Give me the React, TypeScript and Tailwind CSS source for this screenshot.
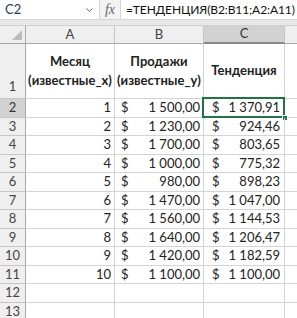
import React from "react";

const rows = [
  { n: 2, a: "1", b: "1 500,00", c: "1 370,91" },
  { n: 3, a: "2", b: "1 230,00", c: "924,46" },
  { n: 4, a: "3", b: "1 700,00", c: "803,65" },
  { n: 5, a: "4", b: "1 000,00", c: "775,32" },
  { n: 6, a: "5", b: "980,00", c: "898,23" },
  { n: 7, a: "6", b: "1 470,00", c: "1 047,00" },
  { n: 8, a: "7", b: "1 560,00", c: "1 144,53" },
  { n: 9, a: "8", b: "1 640,00", c: "1 206,47" },
  { n: 10, a: "9", b: "1 420,00", c: "1 182,59" },
  { n: 11, a: "10", b: "1 100,00", c: "1 100,00" },
];

const font = { fontFamily: "Lato, 'Liberation Sans', sans-serif" };

export default function App() {
  const heights = [19, 18, 19, 18, 19, 18, 19, 18, 19, 18, 19, 18];
  return (
    <div className="w-[297px] h-[318px] overflow-hidden bg-white text-[13px] text-[#222]" style={font}>
      {/* formula bar */}
      <div className="flex h-[20px] border-b border-[#d4d4d4] bg-white">
        <div className="w-[100px] flex items-center justify-between pl-[5px] pr-[6px] border-r border-[#d4d4d4]">
          <span className="text-[#1f3a60]">C2</span>
          <svg width="7" height="4" viewBox="0 0 7 4" className="mt-[1px]">
            <path d="M0.5 0.5 L3.5 3.3 L6.5 0.5" fill="none" stroke="#666" strokeWidth="1" />
          </svg>
        </div>
        <div className="w-[21px] flex items-center justify-center border-r border-[#d4d4d4] bg-[#f3f3f3]">
          <span className="italic text-[#666] text-[14px]" style={{ fontFamily: "'Liberation Serif', serif" }}>fx</span>
        </div>
        <div className="flex-1 flex items-center pl-[5px] whitespace-nowrap overflow-hidden text-[#111] text-[12px] tracking-[-0.1px]">
          =ТЕНДЕНЦИЯ(B2:B11;A2:A11)
        </div>
      </div>
      <div className="h-[6px] bg-[#e8e8e8] border-b border-[#d0d0d0]" />
      {/* grid */}
      <div className="grid grid-cols-[26px_89px_89px_81px_1fr]">
        {/* header row */}
        <div className="h-[18px] bg-[#efefef] border-r border-b border-[#a9a9a9] relative">
          <svg width="10" height="10" className="absolute right-[3px] bottom-[3px]" viewBox="0 0 10 10">
            <path d="M10 0 L10 10 L0 10 Z" fill="#bdbdbd" />
          </svg>
        </div>
        <div className="h-[18px] bg-[#efefef] border-r border-b border-[#c6c6c6] border-b-[#a9a9a9] flex items-center justify-center text-[#444]">A</div>
        <div className="h-[18px] bg-[#efefef] border-r border-b border-[#c6c6c6] border-b-[#a9a9a9] flex items-center justify-center text-[#444]">B</div>
        <div className="h-[18px] bg-[#d2d2d2] border-r border-b-2 border-[#c6c6c6] border-b-[#8a8a8a] flex items-center justify-center text-[#333]">C</div>
        <div className="h-[18px] bg-[#efefef] border-b border-[#a9a9a9]" />

        {/* row 1 */}
        <div className="h-[55px] bg-[#efefef] border-r border-b border-[#c6c6c6] border-r-[#a9a9a9] flex items-end justify-center pb-[2px] text-[#444]">1</div>
        <div className="h-[55px] border-r border-b border-[#d4d4d4] flex flex-col items-center justify-center font-bold leading-[19px]">
          <span>Месяц</span>
          <span>(известные_x)</span>
        </div>
        <div className="h-[55px] border-r border-b border-[#d4d4d4] flex flex-col items-center justify-center font-bold leading-[19px]">
          <span>Продажи</span>
          <span>(известные_y)</span>
        </div>
        <div className="h-[55px] border-r border-b border-[#d4d4d4] flex items-center justify-center font-bold">Тенденция</div>
        <div className="h-[55px] border-b border-[#d4d4d4]" />

        {rows.map((r, i) => {
          const h = heights[i];
          const sel = r.n === 2;
          return (
            <React.Fragment key={r.n}>
              <div
                className={`border-r border-b border-[#c6c6c6] border-r-[#a9a9a9] flex items-center justify-center ${sel ? "bg-[#d2d2d2] text-[#333]" : "bg-[#efefef] text-[#444]"}`}
                style={{ height: h }}
              >
                {r.n}
              </div>
              <div className="border-r border-b border-[#d4d4d4] flex items-center justify-end pr-[3px]" style={{ height: h }}>
                {r.a}
              </div>
              <div className="border-r border-b border-[#d4d4d4] flex items-center justify-between pl-[6px] pr-[3px]" style={{ height: h }}>
                <span>$</span>
                <span>{r.b}</span>
              </div>
              <div className="border-r border-b border-[#d4d4d4] flex items-center justify-between pl-[8px] pr-[4px] relative" style={{ height: h }}>
                {sel && (
                  <>
                    <div className="absolute left-[-2px] top-[-2px] right-[-1px] bottom-[-1px] border-2 border-[#217346]" />
                    <div className="absolute right-[-4px] bottom-[-4px] w-[6px] h-[6px] bg-[#217346] border border-white" />
                  </>
                )}
                <span>$</span>
                <span>{r.c}</span>
              </div>
              <div className="border-b border-[#d4d4d4]" style={{ height: h }} />
            </React.Fragment>
          );
        })}
        {[12, 13].map((n, i) => (
          <React.Fragment key={n}>
            <div
              className="bg-[#efefef] text-[#444] border-r border-b border-[#c6c6c6] border-r-[#a9a9a9] flex items-center justify-center"
              style={{ height: heights[10 + i] }}
            >
              {n}
            </div>
            <div className="border-r border-b border-[#d4d4d4]" style={{ height: heights[10 + i] }} />
            <div className="border-r border-b border-[#d4d4d4]" style={{ height: heights[10 + i] }} />
            <div className="border-r border-b border-[#d4d4d4]" style={{ height: heights[10 + i] }} />
            <div className="border-b border-[#d4d4d4]" style={{ height: heights[10 + i] }} />
          </React.Fragment>
        ))}
      </div>
    </div>
  );
}
